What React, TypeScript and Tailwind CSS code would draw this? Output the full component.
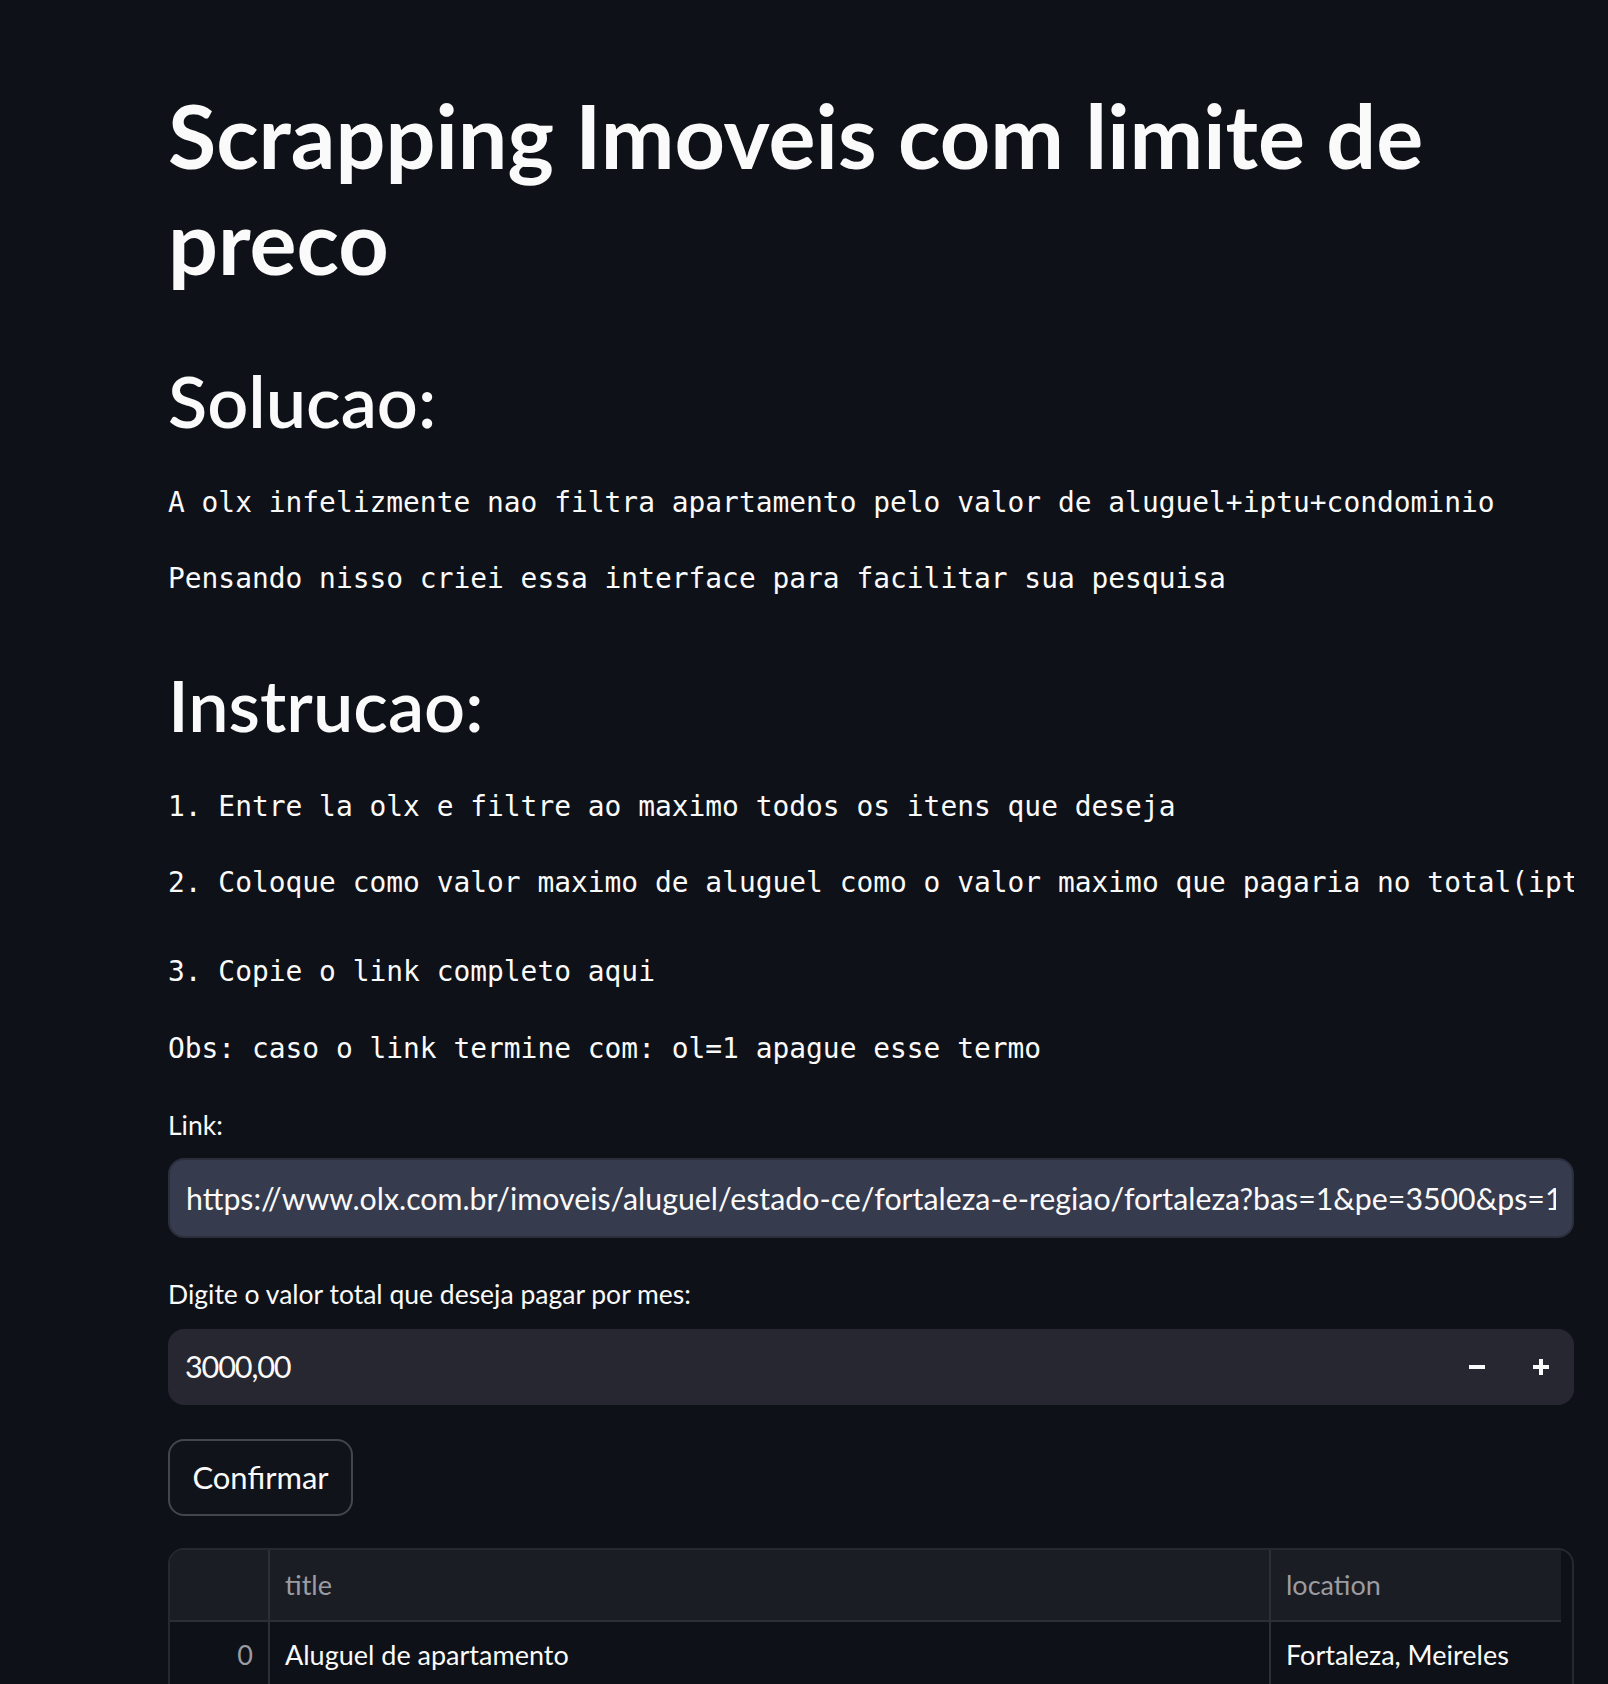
export default function App() {
  const sans = "font-['Lato',sans-serif]";
  const mono = "font-['DejaVu_Sans_Mono',monospace] text-[27.9px] leading-[44.8px] whitespace-pre overflow-hidden";
  return (
    <div className="h-[1684px] overflow-hidden bg-[#0e1117] text-[#fafafa]">
      <div className={`ml-[168px] w-[1406px] pt-[83px] ${sans}`}>
        <h1 className="text-[88px] font-bold leading-[105.6px]">
          Scrapping Imoveis com limite de preco
        </h1>
        <h2 className="mt-[63px] text-[72px] font-semibold leading-[86.4px]">Solucao:</h2>
        <div className={`mt-[37px] ${mono}`}>A olx infelizmente nao filtra apartamento pelo valor de aluguel+iptu+condominio</div>
        <div className={`mt-[32px] ${mono}`}>Pensando nisso criei essa interface para facilitar sua pesquisa</div>
        <h2 className="mt-[59px] text-[72px] font-semibold leading-[86.4px]">Instrucao:</h2>
        <div className={`mt-[37px] ${mono}`}>1. Entre la olx e filtre ao maximo todos os itens que deseja</div>
        <div className={`mt-[32px] ${mono}`}>2. Coloque como valor maximo de aluguel como o valor maximo que pagaria no total(iptu+aluguel+condominio)</div>
        <div className={`mt-[44px] ${mono}`}>3. Copie o link completo aqui</div>
        <div className={`mt-[32px] ${mono}`}>Obs: caso o link termine com: ol=1 apague esse termo</div>

        <div className="mt-[37px] text-[26.5px] leading-[33.6px]">Link:</div>
        <div className="mt-[16px] flex h-[80px] items-center overflow-hidden rounded-[16px] border-2 border-[#2b2e3b] bg-[#373b4e] pl-[16px] pr-[16px]">
          <div className="overflow-hidden whitespace-pre text-[30.3px] leading-[38.4px]">
            https://www.olx.com.br/imoveis/aluguel/estado-ce/fortaleza-e-regiao/fortaleza?bas=1&amp;pe=3500&amp;ps=1000&amp;sf=1
          </div>
        </div>

        <div className="mt-[40px] text-[26.5px] leading-[33.6px]">Digite o valor total que deseja pagar por mes:</div>
        <div className="mt-[17px] flex h-[76px] items-center rounded-[16px] bg-[#262730] pl-[17px]">
          <div className="flex-1 text-[30.7px] leading-[38.4px] tracking-[-1.2px]">3000,00</div>
          <div className="flex h-full w-[64px] items-center justify-center">
            <div className="h-[4px] w-[16px] bg-[#fafafa]" />
          </div>
          <div className="relative mr-[1px] flex h-full w-[64px] items-center justify-center">
            <div className="h-[4px] w-[16px] bg-[#fafafa]" />
            <div className="absolute h-[16px] w-[4px] bg-[#fafafa]" />
          </div>
        </div>

        <div className="mt-[34px] flex h-[77px] w-[185px] items-center justify-center rounded-[16px] border-2 border-[#44464d] bg-[#11131a] text-[31px] leading-[38.4px]">
          Confirmar
        </div>

        <div className="mt-[32px] h-[220px] overflow-hidden rounded-[16px] border-2 border-[#272930] text-[27px] leading-[33.6px]">
          <div className="flex h-[70px]">
            <div className="w-[98px] bg-[#1b1d24]" />
            <div className="w-[2px] bg-[#2d2f36]" />
            <div className="flex w-[999px] items-center bg-[#1b1d24] pl-[15px] text-[#9b9ca1]">title</div>
            <div className="w-[2px] bg-[#2d2f36]" />
            <div className="flex w-[290px] items-center bg-[#1b1d24] pl-[15px] text-[#9b9ca1]">location</div>
          </div>
          <div className="h-[2px] w-[1391px] bg-[#2d2f36]" />
          <div className="flex h-[72px]">
            <div className="flex w-[98px] items-center justify-end pb-[6px] pr-[15px] text-[#9b9ca1]">0</div>
            <div className="w-[2px] bg-[#2d2f36]" />
            <div className="flex w-[999px] items-center pb-[6px] pl-[15px]">Aluguel de apartamento</div>
            <div className="w-[2px] bg-[#2d2f36]" />
            <div className="flex w-[290px] items-center pb-[6px] pl-[15px]">Fortaleza, Meireles</div>
          </div>
        </div>
      </div>
    </div>
  );
}
